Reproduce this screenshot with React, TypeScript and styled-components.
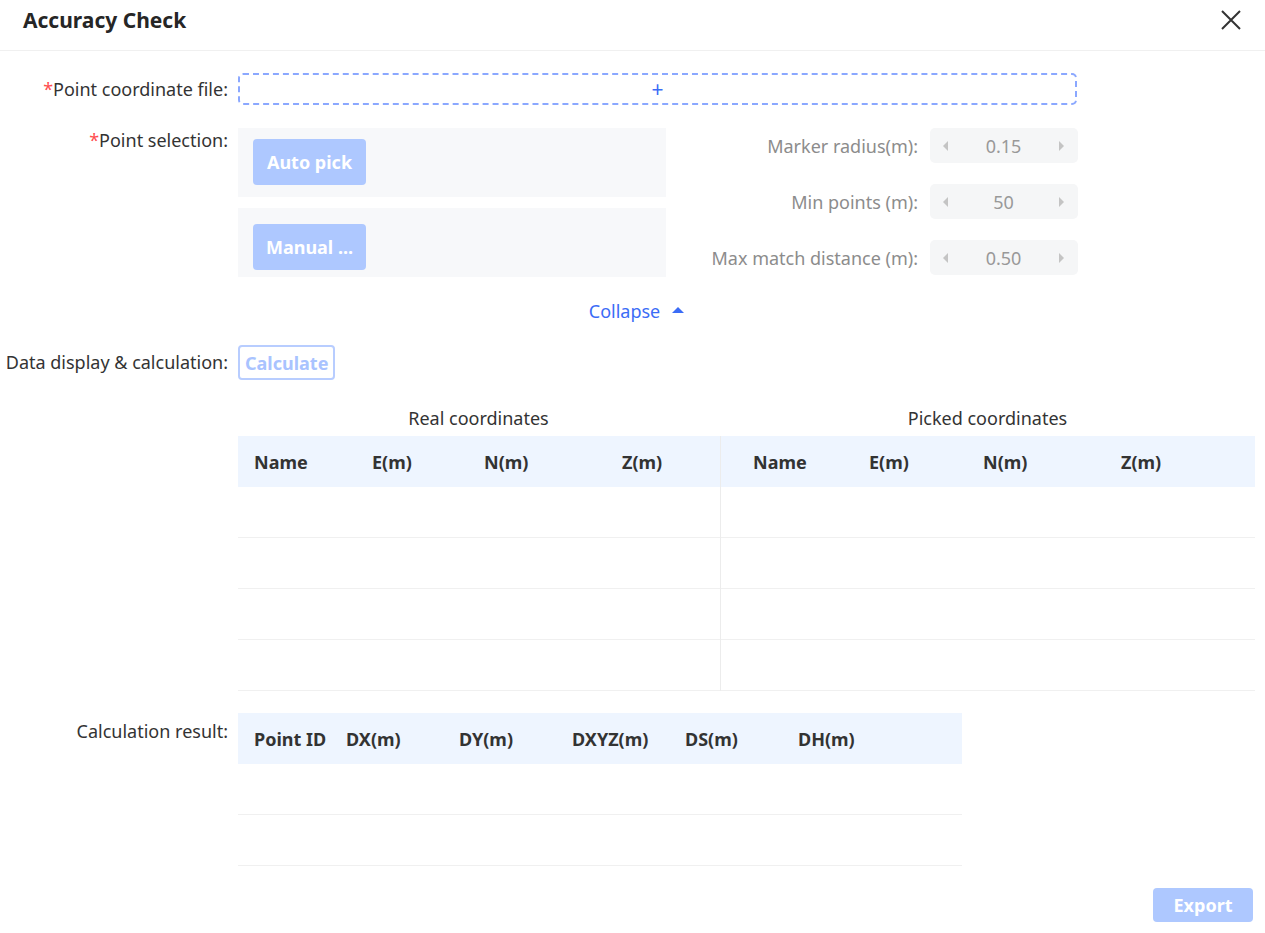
import React from "react";
import styled, { createGlobalStyle } from "styled-components";

const GlobalStyle = createGlobalStyle`
  html, body {
    margin: 0;
    padding: 0;
    background: #fff;
    font-family: "Noto Sans", "Open Sans", "Liberation Sans", sans-serif;
    color: #333;
  }
  * { box-sizing: border-box; }
`;

const Dialog = styled.div`
  width: 1265px;
  min-height: 933px;
  background: #fff;
`;

const Header = styled.div`
  height: 51px;
  display: flex;
  align-items: flex-start;
  justify-content: space-between;
  padding: 6px 22px 0 23px;
  border-bottom: 1px solid #f0f0f0;
`;

const Title = styled.h1`
  margin: 0;
  font-size: 21px;
  line-height: 28px;
  font-weight: 700;
  color: #262626;
`;

const CloseButton = styled.button`
  border: none;
  background: none;
  padding: 0;
  margin-top: 2px;
  width: 24px;
  height: 24px;
  cursor: pointer;
  color: #333;
`;

const Body = styled.div`
  padding: 22px 10px 0 0;
  display: flex;
  flex-direction: column;
`;

const FormRow = styled.div<{ $mt?: number; $mb?: number }>`
  display: flex;
  align-items: flex-start;
  margin-top: ${(p) => p.$mt ?? 0}px;
  margin-bottom: ${(p) => p.$mb ?? 0}px;
`;

const Label = styled.div<{ $lh?: number }>`
  width: 238px;
  flex: none;
  text-align: right;
  padding-right: 10px;
  font-size: 18px;
  line-height: ${(p) => p.$lh ?? 32}px;
  color: #333;
  white-space: nowrap;
`;

const Required = styled.span`
  color: #ff4d4f;
`;

const Content = styled.div`
  flex: 1;
`;

const UploadBox = styled.div`
  width: 839px;
  height: 32px;
  border: 2px dashed #8ba8ff;
  border-radius: 5px;
  display: flex;
  align-items: center;
  justify-content: center;
  color: #3b6cf6;
  font-size: 21px;
`;

const SelectionGrid = styled.div`
  display: flex;
  width: 840px;
`;

const PickColumn = styled.div`
  width: 428px;
  display: flex;
  flex-direction: column;
  gap: 11px;
`;

const PickPanel = styled.div<{ $pt: number }>`
  background: #f7f8fa;
  height: 69px;
  padding: ${(p) => p.$pt}px 15px 0;
`;

const SolidButton = styled.button<{ $w: number; $h: number }>`
  width: ${(p) => p.$w}px;
  height: ${(p) => p.$h}px;
  border: none;
  border-radius: 4px;
  background: #aec8ff;
  color: #fff;
  font-family: inherit;
  font-size: 18px;
  font-weight: 700;
  padding: 0 6px;
  white-space: nowrap;
`;

const ParamColumn = styled.div`
  flex: 1;
  display: flex;
  flex-direction: column;
  gap: 21px;
`;

const ParamRow = styled.div`
  display: flex;
  align-items: center;
  justify-content: flex-end;
  gap: 12px;
`;

const ParamLabel = styled.span`
  font-size: 18px;
  color: #8c8c8c;
  white-space: nowrap;
`;

const NumberInput = styled.div`
  width: 148px;
  height: 35px;
  background: #f5f6f7;
  border-radius: 5px;
  display: flex;
  align-items: center;
  justify-content: space-between;
  padding: 0 14px 0 13px;
  color: #999;
  font-size: 18px;
`;

const Arrow = styled.span<{ $dir: "left" | "right" }>`
  width: 0;
  height: 0;
  border-top: 5px solid transparent;
  border-bottom: 5px solid transparent;
  ${(p) =>
    p.$dir === "left"
      ? "border-right: 5px solid #c4c4c4;"
      : "border-left: 5px solid #c4c4c4;"}
`;

const CollapseRow = styled.div`
  display: flex;
  justify-content: center;
  padding-left: 228px;
  width: 1045px;
  margin: 22px 0 22px;
`;

const CollapseLink = styled.span`
  display: inline-flex;
  align-items: center;
  gap: 12px;
  color: #3b6cf6;
  font-size: 18px;
  line-height: 24px;
`;

const UpTriangle = styled.span`
  width: 0;
  height: 0;
  border-left: 6px solid transparent;
  border-right: 6px solid transparent;
  border-bottom: 6px solid #3b6cf6;
  margin-top: -2px;
`;

const OutlineButton = styled.button`
  height: 35px;
  padding: 0 5px;
  border: 2px solid #b8cdff;
  border-radius: 4px;
  background: #fff;
  color: #a9c3ff;
  font-family: inherit;
  font-size: 18px;
  font-weight: 700;
`;

const TablesWrap = styled.div`
  display: flex;
  margin-left: 238px;
  margin-top: 26px;
`;

const TableBlock = styled.div<{ $w: number; $divider?: boolean }>`
  width: ${(p) => p.$w}px;
  ${(p) => (p.$divider ? "border-left: 1px solid #ececec;" : "")}
`;

const TableTitle = styled.div`
  height: 30px;
  text-align: center;
  font-size: 18px;
  line-height: 24px;
  color: #333;
  background: #fff;
  margin-left: -1px;
  position: relative;
`;

const HeadRow = styled.div<{ $cols: string; $pl: number }>`
  display: grid;
  grid-template-columns: ${(p) => p.$cols};
  height: 51px;
  align-items: center;
  background: #eef5ff;
  padding-left: ${(p) => p.$pl}px;
`;

const HeadCell = styled.div`
  font-size: 18px;
  font-weight: 700;
  color: #333;
  white-space: nowrap;
`;

const BodyRow = styled.div`
  height: 51px;
  border-bottom: 1px solid #f0f0f0;
`;

const ResultTable = styled.div`
  width: 724px;
`;

const Footer = styled.div`
  display: flex;
  justify-content: flex-end;
  padding-right: 2px;
  margin-top: 22px;
`;

const realCols = ["Name", "E(m)", "N(m)", "Z(m)"];
const resultCols = ["Point ID", "DX(m)", "DY(m)", "DXYZ(m)", "DS(m)", "DH(m)"];

const params = [
  { label: "Marker radius(m):", value: "0.15" },
  { label: "Min points (m):", value: "50" },
  { label: "Max match distance (m):", value: "0.50" },
];

const CoordTable = ({
  title,
  width,
  cols,
  pl,
  divider,
}: {
  title: string;
  width: number;
  cols: string;
  pl: number;
  divider?: boolean;
}) => (
  <TableBlock $w={width} $divider={divider}>
    <TableTitle>{title}</TableTitle>
    <HeadRow $cols={cols} $pl={pl}>
      {realCols.map((c) => (
        <HeadCell key={c}>{c}</HeadCell>
      ))}
    </HeadRow>
    {[0, 1, 2, 3].map((i) => (
      <BodyRow key={i} />
    ))}
  </TableBlock>
);

const App = () => {
  return (
    <>
      <GlobalStyle />
      <Dialog>
        <Header>
          <Title>Accuracy Check</Title>
          <CloseButton aria-label="close">
            <svg width="24" height="24" viewBox="0 0 24 24">
              <path d="M3 3L21 21M21 3L3 21" stroke="#333" strokeWidth="2" fill="none" />
            </svg>
          </CloseButton>
        </Header>

        <Body>
          <FormRow $mb={23}>
            <Label>
              <Required>*</Required>Point coordinate file:
            </Label>
            <Content>
              <UploadBox>+</UploadBox>
            </Content>
          </FormRow>

          <FormRow>
            <Label $lh={24}>
              <Required>*</Required>Point selection:
            </Label>
            <SelectionGrid>
              <PickColumn>
                <PickPanel $pt={11}>
                  <SolidButton $w={113} $h={46}>Auto pick</SolidButton>
                </PickPanel>
                <PickPanel $pt={16}>
                  <SolidButton $w={113} $h={46}>Manual ...</SolidButton>
                </PickPanel>
              </PickColumn>
              <ParamColumn>
                {params.map((p) => (
                  <ParamRow key={p.label}>
                    <ParamLabel>{p.label}</ParamLabel>
                    <NumberInput>
                      <Arrow $dir="left" />
                      <span>{p.value}</span>
                      <Arrow $dir="right" />
                    </NumberInput>
                  </ParamRow>
                ))}
              </ParamColumn>
            </SelectionGrid>
          </FormRow>

          <CollapseRow>
            <CollapseLink>
              Collapse <UpTriangle />
            </CollapseLink>
          </CollapseRow>

          <FormRow>
            <Label $lh={35}>Data display &amp; calculation:</Label>
            <Content>
              <OutlineButton>Calculate</OutlineButton>
            </Content>
          </FormRow>

          <TablesWrap>
            <CoordTable title="Real coordinates" width={482} cols="118px 112px 138px 1fr" pl={16} />
            <CoordTable
              title="Picked coordinates"
              width={535}
              cols="116px 114px 138px 1fr"
              pl={32}
              divider
            />
          </TablesWrap>

          <FormRow $mt={22}>
            <Label $lh={36}>Calculation result:</Label>
            <ResultTable>
              <HeadRow $cols="92px 113px 113px 113px 113px 1fr" $pl={16}>
                {resultCols.map((c) => (
                  <HeadCell key={c}>{c}</HeadCell>
                ))}
              </HeadRow>
              <BodyRow />
              <BodyRow />
            </ResultTable>
          </FormRow>

          <Footer>
            <SolidButton $w={100} $h={34}>Export</SolidButton>
          </Footer>
        </Body>
      </Dialog>
    </>
  );
};

export default App;
